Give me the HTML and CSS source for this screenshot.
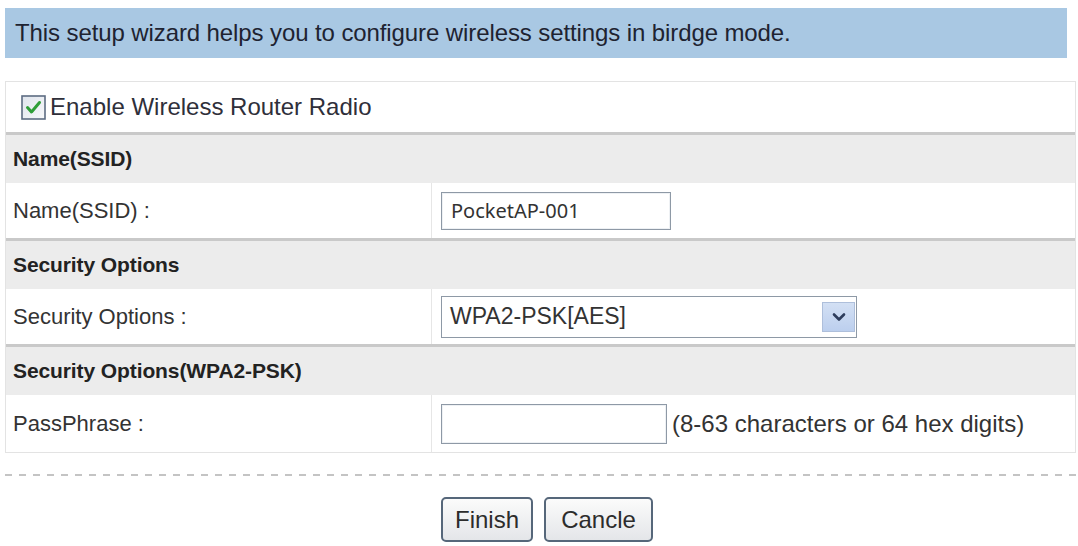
FILE: index.html
```html
<!DOCTYPE html>
<html lang="en">
<head>
  <meta charset="UTF-8">
  <meta name="viewport" content="width=device-width, initial-scale=1">
  <title>Wireless Setup Wizard</title>
  <link rel="stylesheet" href="styles.css">
</head>
<body>

  <div class="page">
    <div class="banner">This setup wizard helps you to configure wireless settings in birdge mode.</div>

    <div class="panel">
      <div class="check-row">
        <label class="check">
          <span class="box">
            <svg width="25" height="25" viewBox="0 0 25 25">
              <defs>
                <linearGradient id="boxbg" x1="0" y1="0" x2="1" y2="1">
                  <stop offset="0" stop-color="#dfe4ec"/>
                  <stop offset="1" stop-color="#f7f8fa"/>
                </linearGradient>
              </defs>
              <rect x="1" y="1" width="23" height="23" fill="url(#boxbg)" stroke="#5d6c82" stroke-width="1.6"/>
              <path d="M6.5 12.5 L10.5 17 L18.5 7.5" fill="none" stroke="#2f9e38" stroke-width="3" stroke-linecap="round" stroke-linejoin="round"/>
            </svg>
          </span>
          Enable Wireless Router Radio
        </label>
      </div>

      <div class="head">Name(SSID)</div>
      <div class="field">
        <div class="label">Name(SSID) :</div>
        <div class="value">
          <input class="text ssid" type="text" value="PocketAP-001">
        </div>
      </div>

      <div class="head">Security Options</div>
      <div class="field">
        <div class="label">Security Options :</div>
        <div class="value">
          <div class="select">
            <span>WPA2-PSK[AES]</span>
            <span class="arrow">
              <svg width="14" height="10" viewBox="0 0 14 10">
                <path d="M2 2.5 L7 7.5 L12 2.5" fill="none" stroke="#2e3d5c" stroke-width="2.6" stroke-linecap="round" stroke-linejoin="round"/>
              </svg>
            </span>
          </div>
        </div>
      </div>

      <div class="head">Security Options(WPA2-PSK)</div>
      <div class="field last">
        <div class="label">PassPhrase :</div>
        <div class="value">
          <input class="text pass" type="password" value="">
          <span class="hint">(8-63 characters or 64 hex digits)</span>
        </div>
      </div>
    </div>

    <div class="dash"></div>

    <div class="buttons">
      <button class="btn finish">Finish</button>
      <button class="btn cancel">Cancle</button>
    </div>
  </div>

</body>
</html>
```

FILE: styles.css
```css
body {
  margin: 0;
  font-family: "Liberation Sans", Arial, sans-serif;
  background-color: #ffffff;
  color: #333;
}

.page {
  padding: 8px 0 0 5px;
}

.banner {
  width: 1062px;
  height: 50px;
  line-height: 50px;
  box-sizing: border-box;
  padding-left: 10px;
  background: #a9c8e3;
  color: #1e2331;
  font-size: 24px;
  letter-spacing: -0.1px;
}

.panel {
  width: 1071px;
  margin-top: 23px;
  box-sizing: border-box;
  border: 1px solid #e3e3e3;
}

.check-row {
  height: 50px;
  display: flex;
  align-items: center;
  padding-left: 15px;
  border-bottom: 3px solid #c9c9c9;
}

.check {
  display: flex;
  align-items: center;
  gap: 4px;
  font-size: 24px;
  color: #2f2f3a;
}

.box {
  display: flex;
  width: 25px;
  height: 25px;
}

.head {
  height: 48px;
  display: flex;
  align-items: center;
  padding-left: 7px;
  background: #ececec;
  font-size: 21px;
  font-weight: bold;
  letter-spacing: -0.1px;
  color: #222;
}

.field {
  height: 55px;
  display: grid;
  grid-template-columns: 426px 1fr;
  border-bottom: 3px solid #c9c9c9;
}

.field.last {
  height: 57px;
  border-bottom: none;
}

.label {
  display: flex;
  align-items: center;
  padding-left: 7px;
  border-right: 1px solid #e6e6e6;
  font-size: 22px;
  color: #333;
}

.value {
  display: flex;
  align-items: center;
  gap: 5px;
  padding-left: 9px;
}

.text {
  box-sizing: border-box;
  width: 230px;
  height: 38px;
  margin: 0;
  padding: 0 9px;
  border: 1px solid #8e99a6;
  box-shadow: inset 0 0 0 1px #eef1f4;
  font-family: "Noto Sans", sans-serif;
  font-size: 20px;
  color: #333;
  outline: none;
}

.pass {
  width: 226px;
  height: 40px;
}

.hint {
  font-size: 24px;
  color: #333;
}

.select {
  box-sizing: border-box;
  width: 416px;
  height: 42px;
  display: flex;
  align-items: center;
  justify-content: space-between;
  padding: 0 1px 0 8px;
  border: 1px solid #8e99a6;
  font-size: 23px;
  color: #333;
}

.arrow {
  display: flex;
  align-items: center;
  justify-content: center;
  width: 31px;
  height: 28px;
  background: linear-gradient(#d3e0f4, #bccfee);
  border: 1px solid #aebfdb;
}

.dash {
  width: 1071px;
  height: 2px;
  margin-top: 21px;
  background: repeating-linear-gradient(to right, #c4c4c4 0 7px, transparent 7px 14px);
}

.buttons {
  width: 1071px;
  box-sizing: border-box;
  padding-left: 13px;
  margin-top: 21px;
  display: flex;
  justify-content: center;
  gap: 11px;
}

.btn {
  height: 45px;
  padding: 0 12px;
  border: 2px solid #56677a;
  border-radius: 5px;
  background: linear-gradient(#fbfbfb, #e4e6e9);
  font-family: "Liberation Sans", Arial, sans-serif;
  font-size: 24px;
  color: #2c2c2c;
}

.finish {
  width: 92px;
}

.cancel {
  width: 109px;
}
```
